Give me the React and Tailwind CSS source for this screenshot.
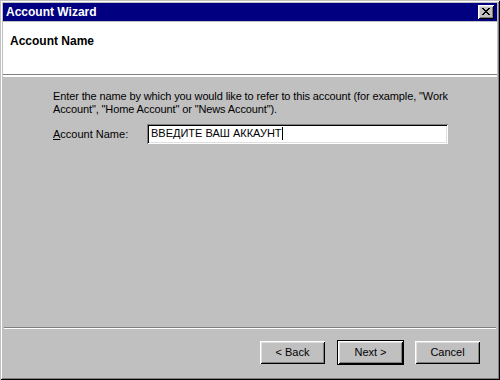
export default function App() {
  return (
    <div
      className="w-[500px] h-[380px] bg-[#c0c0c0] p-[3px] flex flex-col text-[11px] leading-[13px] text-black shadow-[inset_1px_1px_#c0c0c0,inset_-1px_-1px_#000,inset_2px_2px_#fff,inset_-2px_-2px_#808080]"
      style={{ fontFamily: '"Liberation Sans", Arial, sans-serif' }}
    >
      {/* title bar */}
      <div className="h-[18px] bg-[#000080] flex items-center justify-between pl-[3px] pr-[3px]">
        <span className="text-white font-bold text-[12px] pt-px">Account Wizard</span>
        <CloseButton />
      </div>

      {/* header panel */}
      <div className="mt-px bg-white h-[55px] pl-[7px] pt-[13px] shadow-[inset_0_-2px_#fff,inset_0_-3px_#808080]">
        <div className="font-bold text-[12px]">Account Name</div>
      </div>

      {/* body */}
      <div className="flex-1 pl-[50px] pt-[13px]">
        <p className="tracking-[-0.12px]">
          Enter the name by which you would like to refer to this account (for example, "Work
          <br />
          Account", "Home Account" or "News Account").
        </p>
        <div className="mt-[8px] flex items-center">
          <label className="w-[94px]">
            <u>A</u>ccount Name:
          </label>
          <div className="w-[301px] h-[20px] bg-white flex items-center pl-[4px] shadow-[inset_1px_1px_#808080,inset_-1px_-1px_#fff,inset_2px_2px_#000,inset_-2px_-2px_#dfdfdf]">
            <span className="-mt-[2px]">ВВЕДИТЕ ВАШ АККАУНТ</span>
            <span className="w-px h-[13px] bg-black -mt-[1px]" />
          </div>
        </div>
      </div>

      {/* separator */}
      <div className="h-[2px] mx-px border-t border-[#808080] bg-white" />

      {/* buttons */}
      <div className="h-[48px] pl-[257px] pt-[11px] flex items-start">
        <div className="flex items-center">
          <WinButton>&lt; Back</WinButton>
          <div className="ml-[12px] border border-black">
            <WinButton>Next &gt;</WinButton>
          </div>
          <div className="ml-[11px]">
            <WinButton>Cancel</WinButton>
          </div>
        </div>
      </div>
    </div>
  );
}

function WinButton({ children }) {
  return (
    <button className="w-[65px] h-[23px] bg-[#c0c0c0] flex items-center justify-center shadow-[inset_1px_1px_#fff,inset_-1px_-1px_#000,inset_2px_2px_#dfdfdf,inset_-2px_-2px_#808080]">
      {children}
    </button>
  );
}

function CloseButton() {
  const px = [
    [0, 0], [1, 0], [6, 0], [7, 0],
    [1, 1], [2, 1], [5, 1], [6, 1],
    [2, 2], [3, 2], [4, 2], [5, 2],
    [3, 3], [4, 3],
    [2, 4], [3, 4], [4, 4], [5, 4],
    [1, 5], [2, 5], [5, 5], [6, 5],
    [0, 6], [1, 6], [6, 6], [7, 6],
  ];
  return (
    <button className="w-[16px] h-[14px] bg-[#c0c0c0] flex items-center justify-center shadow-[inset_1px_1px_#fff,inset_-1px_-1px_#000,inset_2px_2px_#dfdfdf,inset_-2px_-2px_#808080]">
      <svg width="8" height="7" viewBox="0 0 8 7" shapeRendering="crispEdges" className="-mt-px">
        {px.map(([x, y]) => (
          <rect key={`${x}-${y}`} x={x} y={y} width="1" height="1" fill="#000" />
        ))}
      </svg>
    </button>
  );
}
